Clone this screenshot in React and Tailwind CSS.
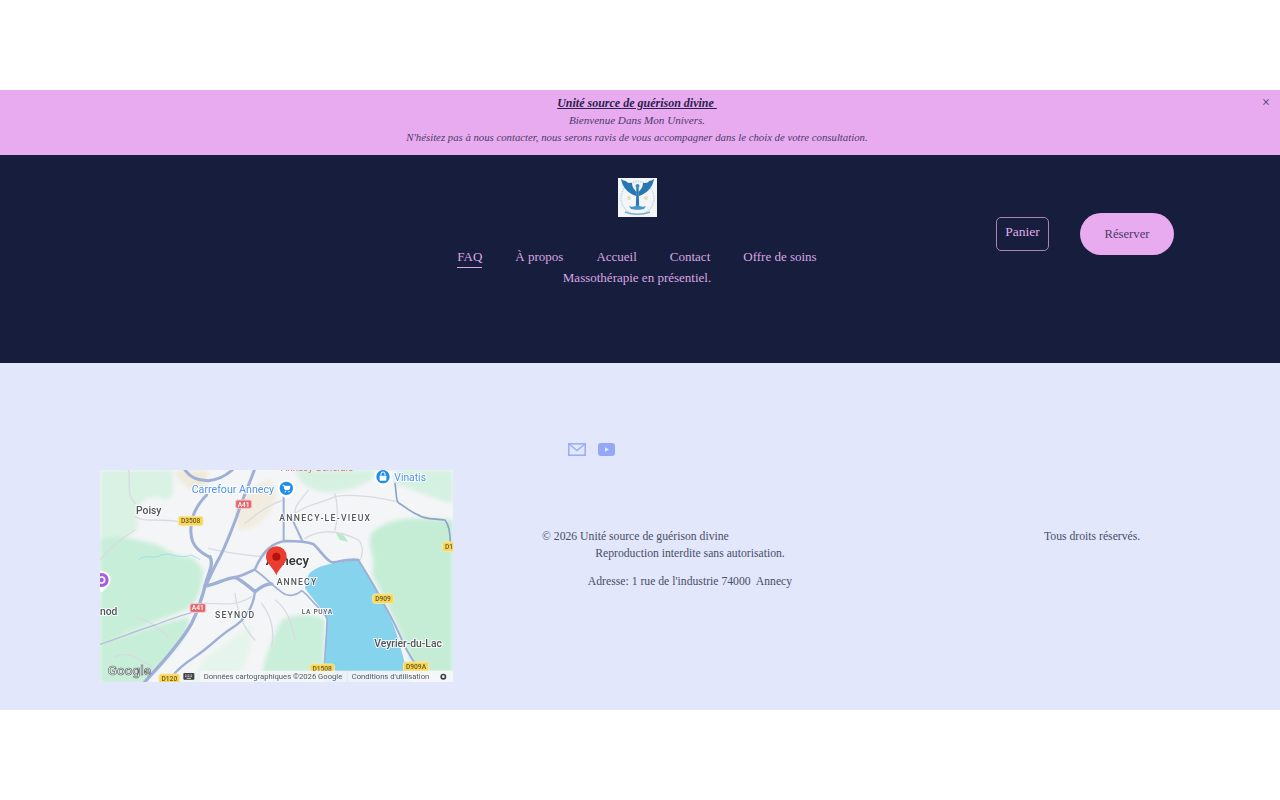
import React from 'react'

const serif = { fontFamily: '"Liberation Serif", serif' }

// All map drawing uses a 3x viewBox so road points are easy to place
function Shield({ x, y, w, h = 28, label, red }) {
  return (
    <g>
      <rect x={x} y={y} width={w} height={h} rx={6} fill={red ? '#e3656d' : '#f7d65c'} stroke={red ? '#f6c9cb' : '#f9e8a4'} strokeWidth="3" />
      <text x={x + w / 2} y={y + h / 2 + 7} textAnchor="middle" fontSize="20" fontWeight="500" fill={red ? '#ffffff' : '#6e5a1c'} fontFamily="Roboto, sans-serif">{label}</text>
    </g>
  )
}

function MapLabel({ x, y, size = 26, spacing = 0, color = '#51565c', weight = 500, children }) {
  return (
    <text x={x} y={y} fontSize={size} fontWeight={weight} letterSpacing={spacing} fill={color} stroke="#ffffff" strokeWidth="6" strokeOpacity="0.85" paintOrder="stroke" fontFamily="Roboto, sans-serif">
      {children}
    </text>
  )
}

function MapPicture() {
  return (
    <svg viewBox="15 30 1059 636" className="block w-[353px] h-[212px] shrink-0 blur-[0.5px]">
      <defs>
        <filter id="soft"><feGaussianBlur stdDeviation="7" /></filter>
      </defs>
      <rect x="15" y="30" width="1059" height="636" fill="#f4f5f7" />
      {/* land cover */}
      <g filter="url(#soft)">
        <path d="M15,30 L235,30 C225,70 250,100 215,120 C170,100 135,110 120,170 C150,210 100,230 60,240 L15,260 Z" fill="#d9f2e4" />
        <path d="M15,240 C70,220 130,240 170,250 C215,260 240,300 290,290 L325,330 C320,400 300,440 270,450 C190,480 100,520 15,550 Z" fill="#c7eed8" />
        <path d="M15,550 C110,520 200,490 280,470 C290,520 240,570 170,640 L150,670 L15,670 Z" fill="#c7eed8" />
        <path d="M240,30 L340,30 L330,110 C300,90 255,85 240,30 Z" fill="#f0eadb" />
        <path d="M420,150 C450,110 480,60 530,60 L545,110 C530,170 480,210 430,210 Z" fill="#f1ecdf" />
        <path d="M600,30 L840,30 C850,60 780,90 720,95 C670,100 620,90 600,30 Z" fill="#d6f1e2" />
        <path d="M900,70 C960,90 1020,120 1074,130 L1074,30 L900,30 Z" fill="#d5f1e2" />
        <path d="M830,220 C880,170 960,170 1074,180 L1074,640 L960,640 C930,540 880,440 830,340 C850,300 810,260 830,220 Z" fill="#c5edd6" />
        <path d="M560,480 C600,460 660,460 690,480 L685,670 L500,670 C500,610 530,540 560,480 Z" fill="#c9eeda" />
        <path d="M330,590 C390,560 430,520 470,490 C480,560 450,620 420,670 L290,670 Z" fill="#e6f5ec" />
      </g>
      <path d="M720,215 L735,240 L760,245 L745,225 Z" fill="#b9e8cf" />
      {/* lake */}
      <path d="M640,345 C650,330 680,315 720,310 C750,304 775,300 790,302 C805,325 830,360 850,400 C870,440 885,470 897,500 C915,550 930,610 945,670 L688,670 L695,472 C680,445 660,425 630,385 Z" fill="#86d3ee" />
      {/* minor roads */}
      <g fill="none" stroke="#d8dbe2" strokeWidth="4" strokeLinecap="round">
        <path d="M120,170 C150,190 190,170 280,190 M15,300 C40,270 70,240 120,210 M100,30 C110,60 90,100 120,130" />
        <path d="M600,160 C640,130 680,130 720,110 C770,100 840,110 905,125 M630,235 C670,210 720,205 790,240 C810,260 800,290 795,300" />
        <path d="M340,265 C400,280 450,285 500,290 M330,430 C390,430 420,440 470,410 M420,400 C430,470 450,510 480,540 M500,430 C530,470 540,510 530,560 M540,420 C570,440 590,480 600,540" />
        <path d="M640,90 C620,120 600,130 600,160 M450,190 C500,150 530,130 565,120 M720,100 C730,140 730,170 720,210" />
        <path d="M60,590 C110,570 130,600 170,620 M120,470 C160,480 190,500 220,530" />
      </g>
      {/* highways */}
      <g fill="none" stroke="#9fb0d6" strokeLinecap="round" strokeLinejoin="round">
        <path d="M150,665 C190,620 250,560 290,490 C315,440 325,400 335,360 C345,330 355,310 345,290" strokeWidth="10" />
        <path d="M270,30 C285,50 300,60 340,62 C370,60 395,45 412,30" strokeWidth="9" />
        <path d="M335,105 C300,140 285,180 288,220 C290,255 310,275 345,292" strokeWidth="9" />
        <path d="M478,30 C460,80 445,110 425,170 C410,210 395,250 375,290 C355,325 345,350 335,372" strokeWidth="9" />
        <path d="M330,378 C360,375 390,355 420,352 C440,360 455,375 480,395 C500,380 515,370 530,372" strokeWidth="10" />
        <path d="M420,352 C450,345 465,335 480,328 C500,280 530,245 575,243 C610,243 635,245 655,252 C680,275 695,305 715,308 C745,302 770,296 790,300" strokeWidth="8" />
        <path d="M480,395 C475,440 450,480 410,505 C370,530 340,565 300,590 C270,610 250,625 235,645" strokeWidth="7" />
        <path d="M480,330 C510,350 540,385 570,403 C590,410 605,405 620,392 C640,405 650,425 668,440 C680,455 695,465 697,480 L688,620" strokeWidth="5" />
        <path d="M790,300 C815,340 840,380 860,420 C885,465 905,500 925,550 C945,590 960,610 980,640" strokeWidth="6" />
        <path d="M566,110 L566,243 M588,170 L622,243" strokeWidth="6" />
        <path d="M15,553 C70,535 130,510 180,495 C220,480 260,465 290,458" strokeWidth="4" stroke="#b5c0da" />
        <path d="M900,70 C905,100 902,120 910,128 C930,140 945,155 970,165 C990,180 1020,175 1050,180 C1062,195 1066,225 1066,250" strokeWidth="5" stroke="#8fa2c9" />
      </g>
      <path d="M130,300 C150,280 170,300 200,285 C230,275 250,300 290,285 C300,295 310,290 315,300" fill="none" stroke="#93dcee" strokeWidth="2.500" />
      {/* labels */}
      <text x="558" y="34" fontSize="29" fill="#dc6a60" fontFamily="Roboto, sans-serif">Annecy Generale</text>
      <MapLabel x={123} y={163} size={31} color="#50555b">Poisy</MapLabel>
      <MapLabel x={290} y={98} size={32} color="#4d93ea" weight={400}>Carrefour Annecy</MapLabel>
      <MapLabel x={898} y={64} size={31} color="#4d93ea" weight={400}>Vinatis</MapLabel>
      <MapLabel x={553} y={182} size={26} spacing={3.800}>ANNECY-LE-VIEUX</MapLabel>
      <MapLabel x={512} y={315} size={39} color="#33373b" weight={600}>Annecy</MapLabel>
      <MapLabel x={545} y={375} size={26} spacing={3.400}>ANNECY</MapLabel>
      <MapLabel x={360} y={473} size={26} spacing={3.600}>SEYNOD</MapLabel>
      <MapLabel x={620} y={461} size={20} spacing={2}>LA PUYA</MapLabel>
      <MapLabel x={15} y={466} size={31} color="#50555b">nod</MapLabel>
      <MapLabel x={838} y={560} size={31} color="#50555b">Veyrier-du-Lac</MapLabel>
      <Shield x={250} y={169} w={74} label="D3508" />
      <Shield x={422} y={120} w={48} h={25} label="A41" red />
      <Shield x={285} y={431} w={47} h={26} label="A41" red />
      <Shield x={1042} y={246} w={40} label="D1" />
      <Shield x={833} y={402} w={62} label="D909" />
      <Shield x={925} y={606} w={76} label="D909A" />
      <Shield x={645} y={612} w={73} label="D1508" />
      <Shield x={192} y={642} w={62} label="D120" />
      {/* place markers */}
      <circle cx="574" cy="85" r="26" fill="#ffffff" />
      <path d="M560,106 L574,118 L588,106 Z" fill="#ffffff" />
      <circle cx="574" cy="85" r="20" fill="#1f8fe8" />
      <path d="M563,76 h4 l3,13 h12 l3,-10 h-17" fill="#ffffff" stroke="#ffffff" strokeWidth="3" strokeLinejoin="round" />
      <circle cx="571" cy="95" r="2" fill="#ffffff" />
      <circle cx="582" cy="95" r="2" fill="#ffffff" />
      <circle cx="864" cy="50" r="26" fill="#ffffff" />
      <path d="M850,72 L864,84 L878,72 Z" fill="#ffffff" />
      <circle cx="864" cy="50" r="20" fill="#1f8fe8" />
      <rect x="854" y="47" width="20" height="15" rx="2" fill="#ffffff" />
      <path d="M858,47 v-5 a6,6 0 0 1 12,0 v5" fill="none" stroke="#ffffff" strokeWidth="3" />
      <circle cx="20" cy="360" r="27" fill="#ffffff" />
      <path d="M5,382 L20,398 L35,382 Z" fill="#ffffff" />
      <circle cx="20" cy="360" r="21" fill="#a65de2" />
      <circle cx="20" cy="360" r="9" fill="none" stroke="#ffffff" strokeWidth="5" />
      {/* red pin */}
      <path d="M544,346 C536,322 513,312 513,290 A31,31 0 1 1 575,290 C575,312 552,322 544,346 Z" fill="#ea3d2f" />
      <circle cx="544" cy="290" r="12" fill="#b0140f" />
      {/* attribution strip */}
      <rect x="315" y="632" width="759" height="34" fill="#f5f6f8" opacity="0.9" />
      <path d="M757,632 V666" stroke="#dcdfe6" strokeWidth="2" />
      <text x="38" y="646" fontSize="41" fontWeight="500" fill="#ececec" stroke="#5a5e62" strokeWidth="1.800" fontFamily="Roboto, sans-serif">Google</text>
      <rect x="265" y="639" width="33" height="20" rx="3" fill="#3c4043" />
      <path d="M270,645 h23 M270,650 h23" stroke="#ffffff" strokeWidth="2.200" strokeDasharray="3 1.500" />
      <path d="M275,655 h13" stroke="#ffffff" strokeWidth="2.200" />
      <text x="326" y="657" fontSize="23" fill="#55595f" fontFamily="Roboto, sans-serif">Données cartographiques ©2026 Google</text>
      <text x="770" y="657" fontSize="23" fill="#55595f" fontFamily="Roboto, sans-serif">Conditions d'utilisation</text>
      <circle cx="1045" cy="650" r="6.500" fill="none" stroke="#3c4043" strokeWidth="5" />
    </svg>
  )
}

function Logo() {
  return (
    <svg viewBox="0 0 39 39" className="block w-[39px] h-[39px] blur-[0.3px]">
      <rect width="39" height="39" fill="#f3f6f8" />
      <circle cx="19.500" cy="20" r="16.500" fill="none" stroke="#c3d6e2" strokeWidth="1.500" strokeDasharray="1.500 1" />
      <path d="M3,1 C4,8 9,15 18,18 L18.500,14 C16,11 14,9 14,5 C11,5 9,5 8,3 C6,3 5,2 3,1 Z" fill="#2777b2" />
      <path d="M36,1 C35,8 30,15 21,18 L20.500,14 C23,11 25,9 25,5 C28,5 30,5 31,3 C33,3 34,2 36,1 Z" fill="#2777b2" />
      <path d="M18.500,7 h2 l0.700,23 h-3.400 Z" fill="#2777b2" />
      <circle cx="19.500" cy="8" r="2" fill="#3f8dc4" />
      <path d="M11,28 C14,29.500 17,28.500 19.500,27 C22,28.500 25,29.500 28,28 L26,31 C23,32 16,32 13,31 Z" fill="#4a94c9" />
      <path d="M7,34 C14,37 25,37 32,34" fill="none" stroke="#86afc9" strokeWidth="1.500" />
      <circle cx="11" cy="20" r="2" fill="#e7dfb4" />
      <circle cx="28" cy="20" r="2" fill="#e7dfb4" />
    </svg>
  )
}

function App() {
  const links = ['FAQ', 'À propos', 'Accueil', 'Contact', 'Offre de soins', 'Massothérapie en présentiel.']

  return (
    <div className="min-h-[800px] bg-white flex flex-col pt-[90px]" style={serif}>
      {/* Announcement bar */}
      <div className="relative h-[65px] bg-[#e9abef] pt-[5px] pr-[6px] flex flex-col items-center leading-[17px] italic text-[#4b3a68]">
        <p className="text-[12px] font-bold underline text-[#2b1f4d]">Unité source de guérison divine&nbsp;</p>
        <p className="text-[11.100px]">Bienvenue Dans Mon Univers.</p>
        <p className="text-[10.750px]">N'hésitez pas à nous contacter, nous serons ravis de vous accompagner dans le choix de votre consultation.</p>
        <span className="absolute right-[10px] top-[4px] text-[14px] leading-[17px] not-italic text-[#3b2f5c]">×</span>
      </div>

      {/* Header */}
      <header className="h-[208px] bg-[#161d3d] flex items-start">
        <div className="w-[437px] shrink-0" />
        <div className="w-[400px] shrink-0 pt-[23px] flex flex-col items-center">
          <Logo />
          <nav className="mt-[29px] flex flex-wrap justify-center gap-x-[33px] text-[13px] leading-[21px] text-[#dba6e2]">
            {links.map((link, i) => (
              <a key={link} className={i === 0 ? 'border-b border-[#dba6e2] h-[22px] -mb-px' : 'h-[21px]'}>{link}</a>
            ))}
          </nav>
        </div>
        <div className="ml-[159px] pt-[58px] flex items-center gap-[31px]">
          <button className="w-[53px] h-[34px] pb-[3px] border-[1.500px] border-[#a882b4] rounded-[5px] text-[13.500px] text-[#e0ade6]">Panier</button>
          <button className="w-[94px] h-[42px] pt-[1px] rounded-full bg-[#e9abef] text-[12.700px] text-[#4b3a68]">Réserver</button>
        </div>
      </header>

      {/* Footer */}
      <footer className="h-[347px] bg-[#e2e7fb] pt-[80px] pl-[100px] text-[11.700px] leading-[16.500px] text-[#4b4e68]">
        <div className="ml-[468px] h-[27px] flex items-start gap-[12px]">
          <svg viewBox="0 0 18 13" className="w-[18px] h-[13px]">
            <rect x="0.800" y="0.800" width="16.400" height="11.400" fill="none" stroke="#9bafF6" strokeWidth="1.600" />
            <path d="M1,1 L9,7.500 L17,1" fill="none" stroke="#9bafF6" strokeWidth="1.600" />
          </svg>
          <svg viewBox="0 0 17 13" className="w-[17px] h-[13px]">
            <rect width="17" height="13" rx="3" fill="#94a8f5" />
            <path d="M7,4.300 L11,6.500 L7,8.700 Z" fill="#e2e7fb" />
          </svg>
        </div>
        <div className="flex items-start">
          <MapPicture />
          <div className="ml-[89px] mt-[59px] w-[296px] text-center">
            <p className="text-left">© 2026 Unité source de guérison divine</p>
            <p>Reproduction interdite sans autorisation.</p>
            <p className="mt-[12px]">Adresse: 1 rue de l'industrie 74000&nbsp; Annecy</p>
          </div>
          <p className="ml-[206px] mt-[59px]">Tous droits réservés.</p>
        </div>
      </footer>
    </div>
  )
}

export default App
